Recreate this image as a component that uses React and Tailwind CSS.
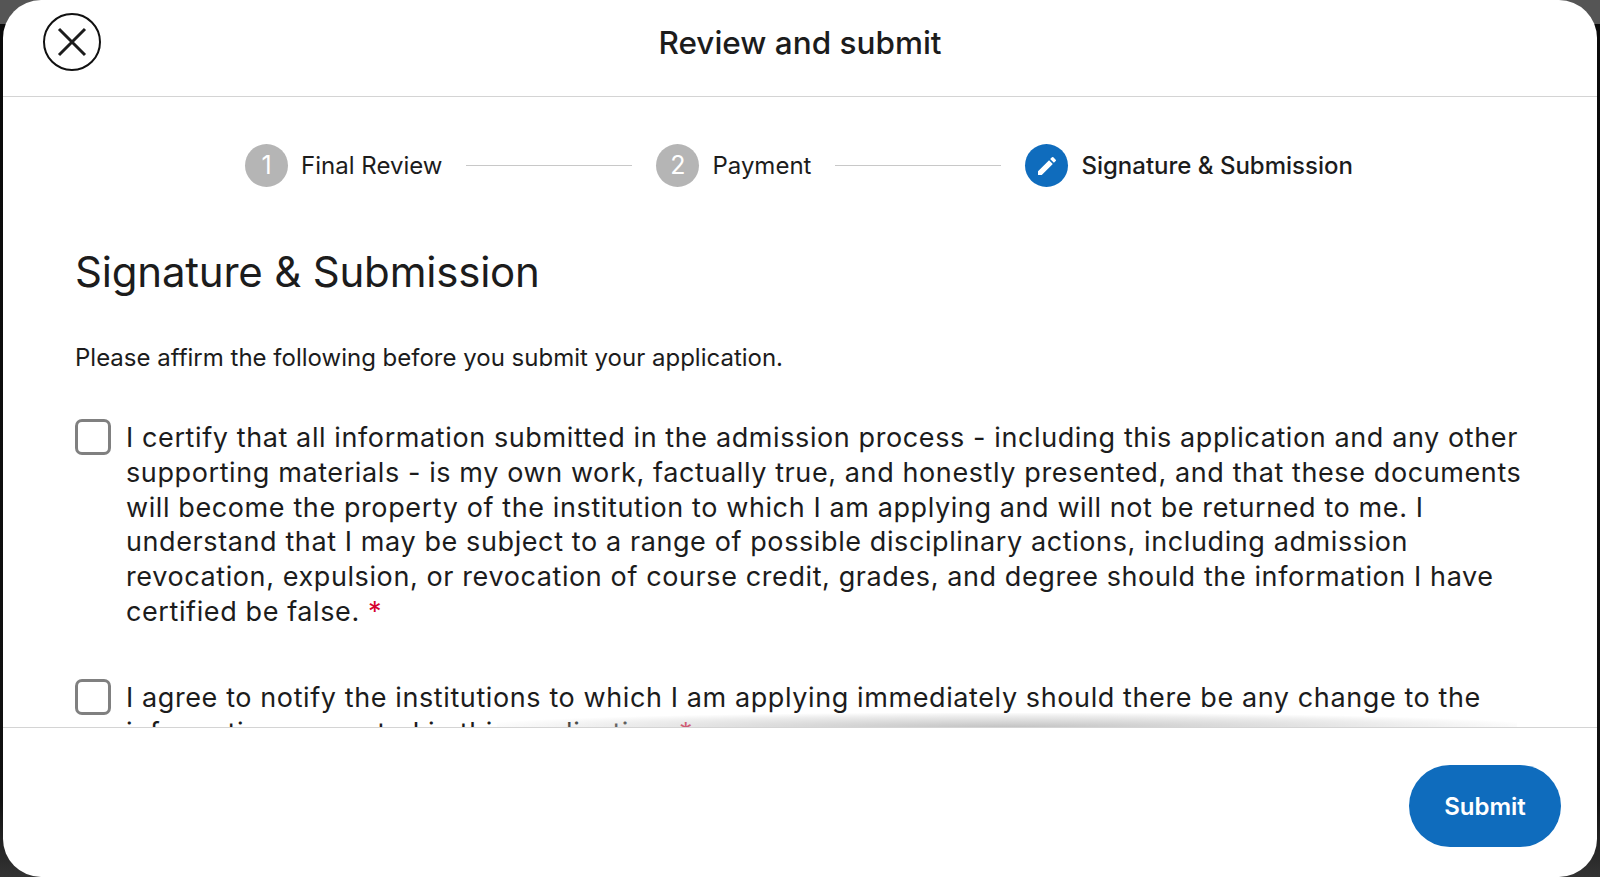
import React from "react";

function Step({ n, label, active }) {
  return (
    <div className="flex items-center gap-[13px]">
      {active ? (
        <div className="flex h-[43px] w-[43px] items-center justify-center rounded-full bg-[#0f6cbd]">
          <svg width="24" height="24" viewBox="0 0 24 24" fill="#fff">
            <path d="M3 17.25V21h3.75L17.81 9.94l-3.75-3.75L3 17.25zM20.71 7.04a1 1 0 0 0 0-1.41l-2.34-2.34a1 1 0 0 0-1.41 0l-1.83 1.83 3.75 3.75 1.83-1.83z" />
          </svg>
        </div>
      ) : (
        <div className="flex h-[43px] w-[43px] items-center justify-center rounded-full bg-[#b5b5b5] text-[25px] text-white">{n}</div>
      )}
      <span className={"whitespace-nowrap text-[24px] text-[#1c1c1c] " + (active ? "font-medium" : "font-normal")}>{label}</span>
    </div>
  );
}

function Line() {
  return <div className="mx-[24px] h-[1px] w-[166px] bg-[#c8c8c8]" />;
}

function Box() {
  return <div className="h-[36px] w-[36px] shrink-0 rounded-[7px] border-[3px] border-[#808080] bg-white" />;
}

export default function App() {
  return (
    <div className="h-[877px] w-full overflow-hidden bg-[linear-gradient(to_bottom,#555555_0,#555555_24px,#0a0a0a_24px,#111111_800px,#333333_877px)] px-[3px] font-['Inter',sans-serif] text-[#1c1c1c]">
      <div className="flex h-[877px] flex-col overflow-hidden rounded-[38px] bg-white">
        <header className="relative flex h-[97px] shrink-0 items-center justify-center border-b border-[#d4d4d4] pb-[10px]">
          <button className="absolute left-[40px] top-[13px] flex h-[58px] w-[58px] items-center justify-center rounded-full border-[2.5px] border-[#111] bg-white">
            <svg width="32" height="32" viewBox="0 0 32 32" stroke="#1c1c1c" strokeWidth="3" fill="none">
              <path d="M3 3 L29 29 M29 3 L3 29" />
            </svg>
          </button>
          <h1 className="text-[31.5px] font-medium">Review and submit</h1>
        </header>
        <main className="relative min-h-0 flex-1 overflow-hidden">
          <div className="pl-[72px] pr-[60px]">
            <div className="flex items-center justify-center pr-[14px] pt-[47px]">
              <Step n="1" label="Final Review" />
              <Line />
              <Step n="2" label="Payment" />
              <Line />
              <Step label="Signature & Submission" active />
            </div>
            <h2 className="mt-[57px] text-[42px] font-normal leading-[56px] tracking-[-0.2px]">Signature &amp; Submission</h2>
            <p className="mt-[41px] text-[24px] leading-[34px]">Please affirm the following before you submit your application.</p>
            <div className="mt-[44px] flex gap-[15px]">
              <Box />
              <p className="pt-[2px] whitespace-nowrap text-[27px] leading-[34.8px] tracking-[0.6px]">
                I certify that all information submitted in the admission process - including this application and any other<br />
                supporting materials - is my own work, factually true, and honestly presented, and that these documents<br />
                will become the property of the institution to which I am applying and will not be returned to me. I<br />
                understand that I may be subject to a range of possible disciplinary actions, including admission<br />
                revocation, expulsion, or revocation of course credit, grades, and degree should the information I have<br />
                certified be false. <span className="text-[#d6002f]">*</span>
              </p>
            </div>
            <div className="mt-[49px] flex gap-[15px]">
              <Box />
              <p className="pt-[2px] whitespace-nowrap text-[27px] leading-[34.8px] tracking-[0.6px]">
                I agree to notify the institutions to which I am applying immediately should there be any change to the<br />
                information requested in this application. <span className="text-[#d6002f]">*</span>
              </p>
            </div>
          </div>
          <div className="pointer-events-none absolute bottom-0 left-[31%] right-[5%] h-[14px] bg-[radial-gradient(ellipse_at_bottom,rgba(170,170,170,0.7)_0%,rgba(210,210,210,0.4)_55%,rgba(255,255,255,0)_75%)]" />
        </main>
        <footer className="flex h-[150px] shrink-0 items-start justify-end border-t border-[#d4d4d4] pr-[36px] pt-[37px]">
          <button className="flex h-[82px] w-[152px] items-center justify-center rounded-full bg-[#0f6cbd] pt-[2px] text-[24px] font-semibold text-white">Submit</button>
        </footer>
      </div>
    </div>
  );
}
